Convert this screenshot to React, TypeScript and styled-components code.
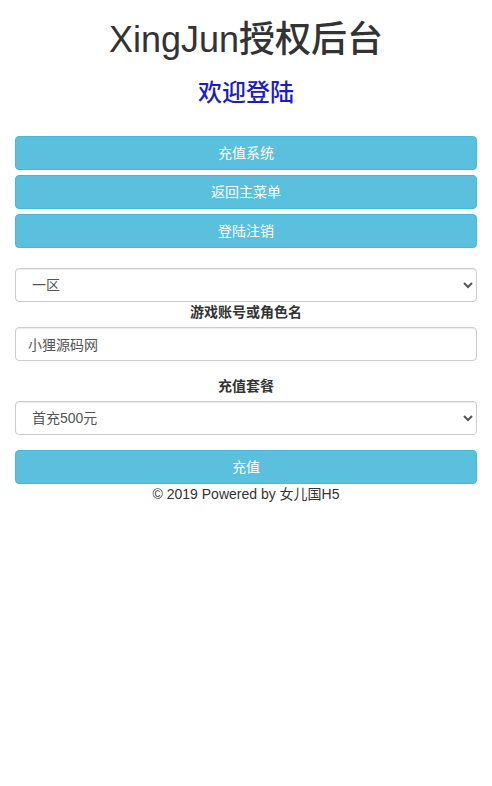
import { createGlobalStyle } from 'styled-components'
import styled from 'styled-components'

const GlobalStyle = createGlobalStyle`
  html, body {
    margin: 0;
    padding: 0;
    background: #fff;
  }
  body {
    font-family: "Liberation Sans", "Noto Sans CJK SC", Arial, sans-serif;
    font-size: 14px;
    line-height: 20px;
    color: #333;
  }
  * {
    box-sizing: border-box;
  }
`

const Page = styled.div`
  padding: 0 15px;
  display: flex;
  flex-direction: column;
`

const Title = styled.h1`
  margin: 20px 0 0;
  font-size: 36px;
  font-weight: 500;
  line-height: 40px;
  text-align: center;
  color: #333;
`

const Welcome = styled.h3`
  margin: 20px 0 30px;
  font-size: 24px;
  font-weight: 500;
  line-height: 26px;
  text-align: center;
  color: #1c1cc9;
`

const Menu = styled.div`
  display: flex;
  flex-direction: column;
  gap: 5px;
  margin-bottom: 20px;
`

const Button = styled.button<{ $top?: number }>`
  display: block;
  width: 100%;
  height: 34px;
  margin-top: ${p => p.$top ?? 0}px;
  padding: 6px 12px;
  font-family: inherit;
  font-size: 14px;
  line-height: 20px;
  color: #fff;
  background: #5bc0de;
  border: 1px solid #46b8da;
  border-radius: 4px;
  cursor: pointer;
`

const Select = styled.select`
  display: block;
  width: 100%;
  height: 34px;
  padding: 6px 12px;
  font-family: inherit;
  font-size: 14px;
  color: #555;
  background: #fff;
  border: 1px solid #ccc;
  border-radius: 4px;
  box-shadow: inset 0 1px 1px rgba(0, 0, 0, 0.075);
`

const Input = styled.input`
  display: block;
  width: 100%;
  height: 34px;
  padding: 6px 12px;
  font-family: inherit;
  font-size: 14px;
  color: #555;
  background: #fff;
  border: 1px solid #ccc;
  border-radius: 4px;
  box-shadow: inset 0 1px 1px rgba(0, 0, 0, 0.075);
`

const Label = styled.label<{ $top?: number }>`
  display: block;
  margin: ${p => p.$top ?? 0}px 0 5px;
  font-weight: bold;
  text-align: center;
`

const Footer = styled.div`
  text-align: center;
  color: #333;
`

export default function App() {
  return (
    <>
      <GlobalStyle />
      <Page>
        <Title>XingJun授权后台</Title>
        <Welcome>欢迎登陆</Welcome>
        <Menu>
          <Button>充值系统</Button>
          <Button>返回主菜单</Button>
          <Button>登陆注销</Button>
        </Menu>
        <Select defaultValue="1">
          <option value="1">一区</option>
          <option value="2">二区</option>
        </Select>
        <Label>游戏账号或角色名</Label>
        <Input defaultValue="小狸源码网" />
        <Label $top={15}>充值套餐</Label>
        <Select defaultValue="500">
          <option value="500">首充500元</option>
        </Select>
        <Button $top={15}>充值</Button>
        <Footer>© 2019 Powered by 女儿国H5</Footer>
      </Page>
    </>
  )
}
